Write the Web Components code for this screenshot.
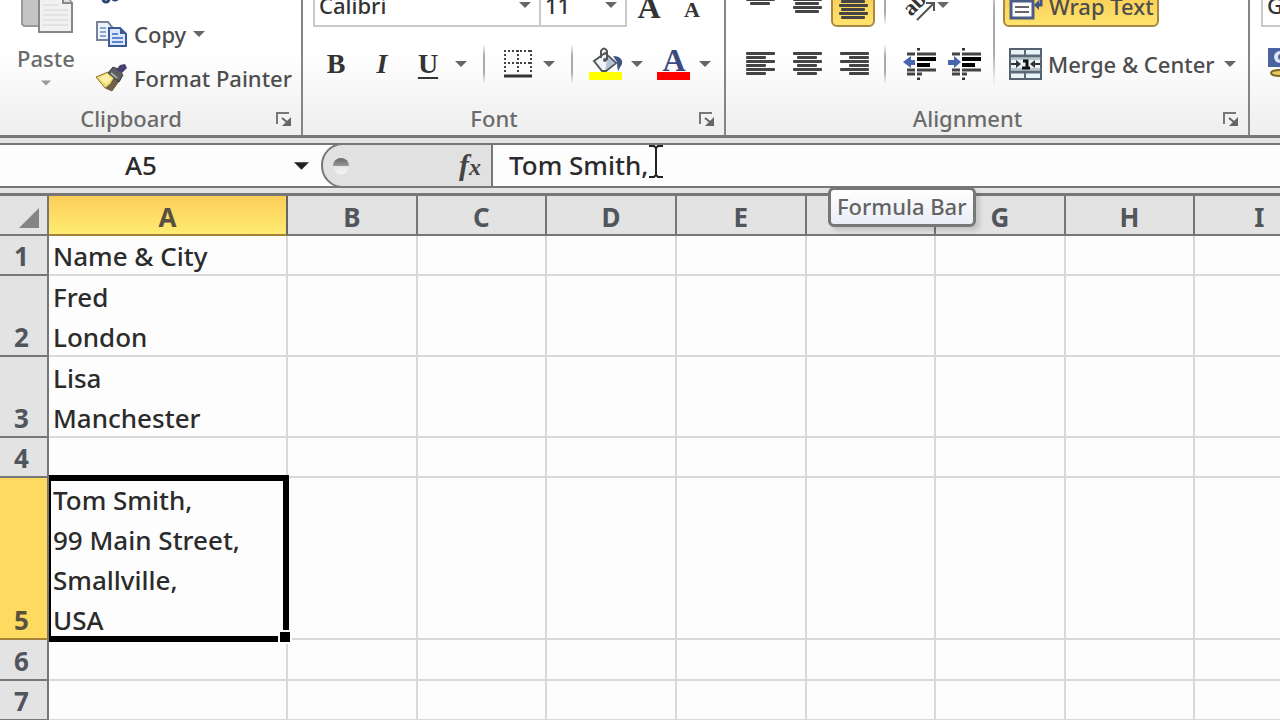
<!DOCTYPE html>
<html lang="en"><head><meta charset="utf-8"><title>Spreadsheet</title>
<style>
html,body{margin:0;height:100%}
body{overflow:hidden;background:#fdfdfd}
</style></head><body>
<excel-app></excel-app>
<script>
const def=(name,html,after)=>customElements.define(name,class extends HTMLElement{
  constructor(){super();const r=this.attachShadow({mode:'open'});r.innerHTML=html;if(after)after.call(this,r);}
});

/* small drop-down arrow */
def('drop-arrow',`<style>:host{display:block;width:12px;height:6px;color:#666;flex:none}svg{display:block;width:100%;height:100%}</style>
<svg viewBox="0 0 12 6" aria-hidden="true"><path d="M0 0H12L6 6Z" fill="currentColor"/></svg>`);

/* dialog launcher in the corner of a group */
def('dialog-launcher',`<style>:host{display:block}button{display:block;border:0;padding:0;background:none}svg{display:block}</style>
<button aria-label="More options"><svg width="16" height="16" viewBox="0 0 16 16"><path d="M1 13V2H13" fill="none" stroke="#777" stroke-width="2"/><path d="M6 7L11 11" stroke="#666" stroke-width="2"/><path d="M15 6V15H6Z" fill="#666"/></svg></button>`);

/* vertical rule that fades at both ends */
def('fade-rule',`<style>:host{display:block;flex:none;width:2px;height:40px;background:linear-gradient(#ccc0,#aaa 30%,#aaa 70%,#ccc0)}</style>`);

/* group of the ribbon: content above, caption and launcher below */
def('ribbon-group',`<style>
:host{display:flex;flex-direction:column;justify-content:flex-end;box-sizing:border-box;border-right:2px solid #858585;flex:none}
footer{display:grid;grid-template-columns:1fr auto;align-items:center;height:32px;padding-right:9px;color:#6b6b6b}
.cap{text-align:center;line-height:30px;padding:0 14px 2px 0}
</style><slot></slot><footer><span class="cap"></span><dialog-launcher></dialog-launcher></footer>`,function(r){
  r.querySelector('.cap').textContent=this.getAttribute('caption');});

def('clipboard-tools',`<style>
:host{display:grid;grid-template-columns:92px 1fr;align-items:end}
button{border:0;padding:0;background:none;font:inherit;color:#4d4d4d;display:flex;align-items:center;text-align:left}
.paste{flex-direction:column;color:#6b6b6b;padding-bottom:17px;gap:10px;line-height:24px}
.paste drop-arrow{color:#999;width:10px}
.paste svg{margin-bottom:2px}
.side{display:flex;flex-direction:column;padding:0 0 3px 3px}
.side button{height:44px;gap:7px;line-height:28px}
svg{display:block;flex:none}
</style>
<button class="paste"><svg width="56" height="40" viewBox="0 0 56 40"><path d="M4 0H26V32H6L4 30Z" fill="#c4c4c4" stroke="#999" stroke-width="2"/><path d="M21 0H46L54 9V38H21Z" fill="#f1f1f1" stroke="#888" stroke-width="2"/><path d="M45 0V9H54" fill="#ddd" stroke="#888" stroke-width="2"/><path d="M25 11H41M25 16H50M25 21H50M25 26H50M25 31H50" stroke="#d6d6d6"/></svg>Paste<drop-arrow></drop-arrow></button>
<div class="side">
<button aria-label="Cut"><svg width="32" height="30" viewBox="0 0 32 30"><circle cx="11" cy="24" r="3" fill="none" stroke="#2f4577" stroke-width="3"/><circle cx="20" cy="22" r="3" fill="none" stroke="#2f4577" stroke-width="3"/><path d="M12 19L20 2M18 18L11 2" stroke="#777" stroke-width="2"/></svg></button>
<button><svg width="32" height="28" viewBox="0 0 32 28"><path d="M2 2H13L17 7V20H2Z" fill="#eef3fb" stroke="#76819a" stroke-width="2"/><path d="M5 8H11M5 12H11M5 16H11" stroke="#89a6d8" stroke-width="2"/><path d="M14 8H25L31 14V26H14Z" fill="#dbe8fb" stroke="#3c5a9a" stroke-width="2"/><path d="M25 8V14H31Z" fill="#3c5a9a"/><path d="M17 14H23M17 18H28M17 22H28" stroke="#5c86cf" stroke-width="2"/></svg>Copy<drop-arrow></drop-arrow></button>
<button><svg width="32" height="28" viewBox="0 0 32 28"><path d="M1 13L13 8L24 17L17 27L10 24Z" fill="#f0dc72" stroke="#8a7431"/><path d="M10 24L15 20L21 10L26 15L17 27Z" fill="#6e6248"/><path d="M13 9L18 3L23 5L28 11L24 18L18 13Z" fill="#5e5e60" stroke="#3c3c3c"/><path d="M21 6L25 1L30 0L32 4L27 9Z" fill="#463f70"/><path d="M16 9L22 14" stroke="#aaa" stroke-width="2"/><path d="M4 14L12 10L17 15L11 20Z" fill="#fbf0a8"/></svg>Format Painter</button>
</div>`);

def('font-tools',`<style>
:host{display:flex;flex-direction:column;gap:15px;padding:0 0 17px 10px}
.top,.row{display:flex;align-items:center;height:44px}
.top{align-items:flex-end}
.box{display:flex;align-items:center;border:2px solid #c9c9c9;background:#fff;height:44px;box-sizing:border-box;padding-right:8px}
.box+.box{border-left:0}
.box input{border:0;background:none;padding:0 0 0 4px;font:500 22px/32px "Noto Sans",sans-serif;color:#333;min-width:0;flex:1;outline:0}
.face{width:228px}.size{width:86px}
button{border:0;padding:0;background:none;color:#333;display:flex;align-items:center;justify-content:center;width:42px}
.grow,.shrink{font:700 32px/40px "Liberation Serif",serif;height:40px}
.grow{width:44px}
.shrink{font-size:22px;padding-top:6px}
.t{font:700 28px/36px "Liberation Serif",serif;width:46px}
.i{font-style:italic}.u{text-decoration:underline;text-decoration-thickness:2px;text-underline-offset:4px}
.dd{width:20px;display:flex;justify-content:center}
.gap{margin-right:6px}
fade-rule{margin:0 12px}
svg{display:block}
</style>
<div class="top"><div class="box face"><input aria-label="Font" value="Calibri"><drop-arrow></drop-arrow></div><div class="box size"><input aria-label="Font size" value="11"><drop-arrow></drop-arrow></div><button class="grow" aria-label="Grow font">A</button><button class="shrink" aria-label="Shrink font">A</button></div>
<div class="row"><button class="t">B</button><button class="t i">I</button><button class="t u">U</button><span class="dd"><drop-arrow></drop-arrow></span><fade-rule></fade-rule>
<button aria-label="Borders"><svg width="28" height="28" viewBox="0 0 28 28"><path d="M0 1H28M0 13H28" stroke="#444" stroke-width="2" stroke-dasharray="2 2"/><path d="M1 0V24M14 0V24M27 0V24" stroke="#444" stroke-width="2" stroke-dasharray="2 2"/><path d="M0 26H28" stroke="#333" stroke-width="3"/></svg></button><span class="dd"><drop-arrow></drop-arrow></span><fade-rule></fade-rule>
<button aria-label="Fill colour"><svg width="34" height="34" viewBox="0 0 34 34"><path d="M5 14L16 6L27 16L17 24H13Z" fill="#f0f3f8" stroke="#555" stroke-width="2"/><path d="M16 23L26 16L19 10Z" fill="#b6c2d8"/><path d="M12 11V4Q15 -1 18 4V13" fill="none" stroke="#555" stroke-width="2"/><circle cx="16" cy="13" r="2" fill="#555"/><path d="M24 9Q34 9 33 17L29 24Q28 19 28 15Z" fill="#3d5288"/><rect y="25" width="33" height="8" fill="#ff0"/></svg></button><span class="dd gap"><drop-arrow></drop-arrow></span>
<button aria-label="Font colour"><svg width="34" height="34" viewBox="0 0 34 34"><text x="17" y="24" text-anchor="middle" font-family="Liberation Serif,serif" font-weight="700" font-size="32" fill="#3a4a80">A</text><rect y="25" width="33" height="8" fill="red"/></svg></button><span class="dd"><drop-arrow></drop-arrow></span></div>`);

/* six text lines, alternately long and short */
def('line-icon',`<style>:host{display:block}svg{display:block}</style>`,function(r){
  const k=this.getAttribute('kind'),short=k==='stack'?24:20;let s='';
  for(let i=0;i<6;i++){const w=i%2?short:29,x=k==='left'?0:k==='right'?29-w:(29-w)>>1;
    s+='<rect x="'+x+'" y="'+i*4+'" width="'+w+'" height="3" rx="1" fill="#444"/>';}
  r.innerHTML+='<svg width="29" height="24" viewBox="0 0 29 24" aria-hidden="true">'+s+'</svg>';});

def('indent-icon',`<style>:host{display:block}svg{display:block}</style>`,function(r){
  const dec=this.getAttribute('kind')==='decrease';
  r.innerHTML+=`<svg width="34" height="32" viewBox="0 0 34 32" aria-hidden="true"><path d="M4 6H12M4 22H12M4 26H12" stroke="#444" stroke-width="3"/><path d="M14 6H33M14 22H33M14 26H19" stroke="#444" stroke-width="3"/><path d="M14 11H33M14 17H27" stroke="#000" stroke-width="4"/><path d="M14 1H17M14 31H17" stroke="#333" stroke-width="3"/>${dec?'<path d="M0 14L8 8V12H12V17H8V20Z" fill="#4866ae"/>':'<path d="M13 14L6 8V12H0V17H6V20Z" fill="#4866ae"/>'}</svg>`;});

def('align-tools',`<style>
:host{display:grid;grid-template-columns:267px 2px 1fr;align-items:end;padding-bottom:17px}
.left,.right{display:flex;flex-direction:column;gap:15px}
.row{display:flex;align-items:center;height:44px}
button{border:0;padding:0;background:none;font:inherit;color:#4d4d4d;display:flex;align-items:center;justify-content:center;box-sizing:border-box;height:44px}
.left .row{padding-left:11px}
.left button{width:47px}
.left .ind{width:45px}
.left .ori{width:40px}
.left .v{align-items:flex-end}
.v.top{padding-bottom:21px}.v.mid{padding-bottom:13px}.v.bot{padding-bottom:5px}
.on{background:linear-gradient(#f7c650,#ffe46c);border:2px solid #a88943;border-radius:6px}
.left .on{width:44px;margin-right:3px}
fade-rule{margin:0 11px 0 6px}
fade-rule.long{margin:0;height:110px}
.right{padding-left:8px}
.wrap{width:156px;gap:6px;padding:2px 0 0 4px;justify-content:flex-start}
.merge{gap:6px;padding-left:6px}
.merge drop-arrow{margin-left:3px}
svg{display:block;flex:none}
</style>
<div class="left"><div class="row"><button class="v top" aria-label="Top align"><line-icon kind="center"></line-icon></button><button class="v mid" aria-label="Middle align"><line-icon kind="stack"></line-icon></button><button class="v bot on" aria-label="Bottom align"><line-icon kind="stack"></line-icon></button><fade-rule></fade-rule>
<button class="ori" aria-label="Orientation"><svg width="40" height="44" viewBox="0 0 40 44"><text x="14" y="34" transform="rotate(-45 14 34)" font-family="Liberation Serif,serif" font-weight="700" font-size="22" fill="#333">ab</text><path d="M20 37L37 20M29 20H37V28" fill="none" stroke="#555" stroke-width="2"/></svg></button><drop-arrow></drop-arrow></div>
<div class="row"><button aria-label="Align left"><line-icon kind="left"></line-icon></button><button aria-label="Center"><line-icon kind="center"></line-icon></button><button aria-label="Align right"><line-icon kind="right"></line-icon></button><fade-rule></fade-rule><button class="ind" aria-label="Decrease indent"><indent-icon kind="decrease"></indent-icon></button><button class="ind" aria-label="Increase indent"><indent-icon kind="increase"></indent-icon></button></div></div>
<fade-rule class="long"></fade-rule>
<div class="right"><div class="row"><button class="on wrap"><svg width="34" height="30" viewBox="0 0 34 30"><rect x="2" y="10" width="22" height="17" fill="#fff" stroke="#4b5c86" stroke-width="3"/><path d="M6 16H20M6 21H20" stroke="#666" stroke-width="2"/><path d="M32 2V14H28" fill="none" stroke="#3d5288" stroke-width="3"/><path d="M25 14L30 9V19Z" fill="#3d5288"/></svg>Wrap Text</button></div><div class="row"><button class="merge"><svg width="33" height="32" viewBox="0 0 33 32"><rect x="1" y="1" width="31" height="30" fill="#e9f2f6" stroke="#55616e" stroke-width="2"/><path d="M1 8H32M1 24H32" stroke="#5c6977" stroke-width="3"/><path d="M1 11H32M1 21H32" stroke="#8a98a4" stroke-width="1"/><path d="M16 1V9M16 23V31" stroke="#5c6977" stroke-width="2"/><path d="M2 16H11M22 16H31" stroke="#333" stroke-width="2"/><path d="M12 16L7 12V20ZM21 16L26 12V20Z" fill="#333"/><path d="M14 13H18V20M13 20H21" fill="none" stroke="#111" stroke-width="3"/></svg>Merge &amp; Center<drop-arrow></drop-arrow></button></div></div>`);

def('number-tools',`<style>
:host{display:flex;flex-direction:column;gap:15px;flex:1;min-width:0;overflow:hidden;align-self:flex-end;padding:0 0 49px 11px}
input{box-sizing:border-box;width:228px;height:44px;border:2px solid #c9c9c9;background:#fff;padding:0 0 0 4px;font:500 22px/32px "Noto Sans",sans-serif;color:#333}
button{display:flex;align-items:center;height:44px;width:46px;border:0;background:none;padding:0 0 0 7px}
svg{display:block}
</style><input aria-label="Number format" value="General"><button aria-label="Accounting format"><svg width="34" height="32" viewBox="0 0 34 32"><rect width="34" height="19" fill="#4b63a0"/><circle cx="12" cy="9" r="6" fill="#dde6f5"/><circle cx="13" cy="9" r="3" fill="#4b63a0"/><ellipse cx="12" cy="25" rx="9" ry="3" fill="#e7cf62" stroke="#7f6a28" stroke-width="2"/></svg></button>`);

def('formula-bar',`<style>
:host{display:grid;grid-template-columns:321px 172px 1fr;position:relative;border:solid #777;border-width:2px 0;height:41px;background:#fdfdfd;margin:5px 0;font-size:26px}
.name{display:flex;align-items:center;padding-right:12px}
input{border:0;background:none;outline:0;padding:0 0 2px;min-width:0;flex:1;font:500 26px/38px "Noto Sans",sans-serif;color:#2b2b2b}
.name input{text-align:center;padding-right:12px}
.name drop-arrow{color:#222;width:15px;height:8px}
.fx{display:flex;align-items:center;justify-content:space-between;box-sizing:border-box;background:#e1e1e1;border:2px solid #777;border-radius:22px 0 0 22px;margin:-2px 0;padding:0 10px}
.dot{width:16px;height:16px;border-radius:8px;background:linear-gradient(#666,#999 50%,#e4e4e4 51%,#f6f6f6)}
button{border:0;padding:0;background:none;color:#444;font:italic 700 30px/36px "Liberation Serif",serif}
button small{font-size:24px}
.formula{padding-left:16px}
.cursor{position:absolute;left:649px;top:0;z-index:2}
.tip{position:absolute;left:828px;top:42px;z-index:3;box-sizing:border-box;height:40px;padding:0 6px;border:3px solid #777;border-radius:6px;background:linear-gradient(#fff,#e9edf6);color:#636363;font-size:22px;line-height:32px;box-shadow:4px 4px 5px #0002;white-space:nowrap}
</style><div class="name"><input aria-label="Name box" value="A5"><drop-arrow></drop-arrow></div><div class="fx"><span class="dot"></span><button aria-label="Insert function">f<small>x</small></button></div><input class="formula" aria-label="Formula" value="Tom Smith,">
<svg class="cursor" width="14" height="33" viewBox="0 0 14 33" aria-hidden="true"><path d="M0 1H5L7 3L9 1H14M7 3V30M0 32H5L7 30L9 32H14" fill="none" stroke="#222" stroke-width="2"/></svg>
<div class="tip" role="tooltip">Formula Bar</div>`);

const rows=[[40,'Name & City'],[81,'Fred<br>London'],[81,'Lisa<br>Manchester'],[40,''],[162,'Tom Smith,<br>99 Main Street,<br>Smallville,<br>USA'],[41,''],[40,'']];
const cols='ABCDEFGHI'.split('');
def('sheet-grid',`<style>
:host{display:block;border-top:3px solid #777;font-size:26px;line-height:40px;color:#2b2b2b}
table{table-layout:fixed;width:calc(100% + 45px);border-collapse:separate;border-spacing:0}
th,td{box-sizing:border-box;padding:0;vertical-align:bottom}
th{background:#e3e3e3;color:#50565b;border:solid #777;border-width:0 2px 2px 0}
thead th{height:40px;line-height:34px;padding-top:4px}
tbody th{padding-right:4px}
tr>:first-child{width:49px}
td{border:solid #d9d9d9;border-width:0 2px 2px 0;background:#fdfdfd;padding-left:4px;white-space:nowrap;text-align:left}
.hot-col{width:239px;background:linear-gradient(#fbcd59,#ffec72);border-color:#666 #666 #a5823a #666;color:#5a5040}
.hot-row th{background:#ffda60;border-bottom-color:#a5823a;color:#5a5040}
.text{display:block;line-height:40px;margin-bottom:-2px}
.sel{position:relative}
.frame{position:absolute;inset:-3px -3px -4px 0;border:6px solid #000;border-left-width:2px}
.frame::after{content:"";position:absolute;right:-9px;bottom:-8px;width:10px;height:10px;background:#000;border:2px solid #fdfdfd}
svg{display:block;margin:0 0 6px 19px}
</style><table><thead><tr><th aria-label="Select all"><svg width="20" height="20" viewBox="0 0 20 20"><path d="M20 0V20H0Z" fill="#858585"/></svg></th>${cols.map(c=>`<th scope="col"${c==='A'?' class="hot-col"':''}${c==='F'?' aria-label="F">':'>'+c}</th>`).join('')}</tr></thead>
<tbody>${rows.map(([h,t],i)=>`<tr style="height:${h}px"${i===4?' class="hot-row"':''}><th scope="row"><span class="text">${i+1}</span></th>${cols.map((c,j)=>j?'<td></td>':`<td${i===4?' class="sel"':''}><span class="text">${t.replace('&','&amp;')}</span>${i===4?'<span class="frame"></span>':''}</td>`).join('')}</tr>`).join('')}</tbody></table>`);

def('excel-app',`<style>:host{display:block;background:#e4e4e4;font:500 22px/28px "Noto Sans",sans-serif}
.ribbon{display:flex;height:135px;border-bottom:3px solid #777;background:linear-gradient(#fff 40%,#eee);overflow:hidden}
.clip{width:303px}.font{width:423px}.align{width:524px}
</style>
<div class="ribbon"><ribbon-group class="clip" caption="Clipboard"><clipboard-tools></clipboard-tools></ribbon-group>
<ribbon-group class="font" caption="Font"><font-tools></font-tools></ribbon-group>
<ribbon-group class="align" caption="Alignment"><align-tools></align-tools></ribbon-group><number-tools></number-tools></div>
<formula-bar></formula-bar><sheet-grid></sheet-grid>`);
</script></body></html>
